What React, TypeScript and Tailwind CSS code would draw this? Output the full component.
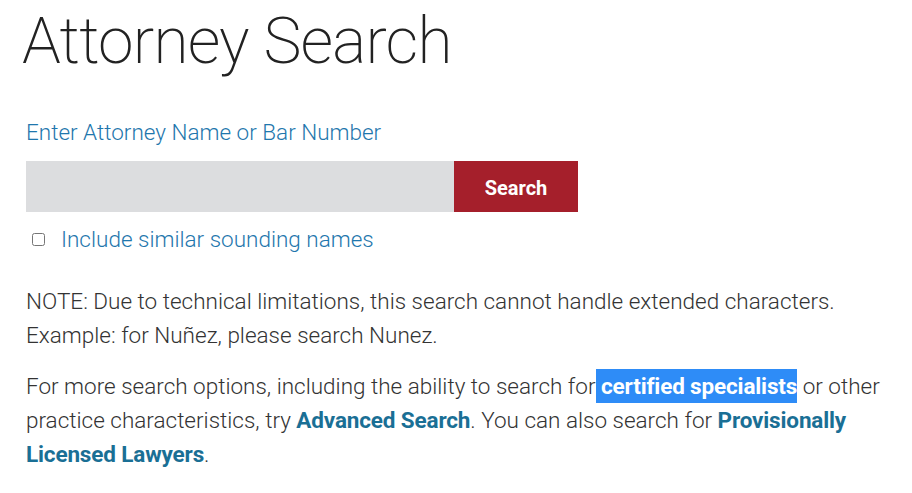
import React from 'react';

const App: React.FC = () => {
  return (
    <div className="min-h-screen bg-white px-[26px] font-['Roboto',sans-serif] text-[#333]">
      <h1 className="ml-[-4px] pt-[2px] text-[64px] font-[200] leading-[80px] tracking-[-0.8px] text-[#222]">Attorney Search</h1>

      <form className="mt-[36px]" onSubmit={e => e.preventDefault()}>
        <label htmlFor="q" className="block text-[22.5px] font-light leading-[28px] text-[#1f77ad]">
          Enter Attorney Name or Bar Number
        </label>
        <div className="mt-[15px] flex">
          <input id="q" type="text" className="h-[51px] w-[428px] bg-[#dcdddf] px-3 text-[18px] outline-none" />
          <button type="submit" className="h-[51px] w-[124px] pt-[2px] bg-[#a51f2b] text-[20px] font-bold text-white">
            Search
          </button>
        </div>
        <label className="mt-[13px] flex h-[28px] items-center">
          <input type="checkbox" className="ml-[6px] h-[13px] w-[13px]" />
          <span className="ml-[16px] text-[22.5px] font-light leading-[28px] text-[#1f77ad]">Include similar sounding names</span>
        </label>
      </form>

      <p className="mt-[31px] text-[22.5px] font-light leading-[34px]">
        NOTE: Due to technical limitations, this search cannot handle extended characters. Example: for Nuñez, please search Nunez.
      </p>
      <p className="mt-[17px] text-[22.5px] font-light leading-[34px]">
        For more search options, including the ability to search for
        <a href="#" className="bg-[#2e8cf7] py-[4px] font-bold tracking-[-0.15px] text-white">{' '}certified specialists</a> or other practice characteristics, try{' '}
        <a href="#" className="font-bold tracking-[-0.15px] text-[#1a6f95]">Advanced Search</a>. You can also search for{' '}
        <a href="#" className="font-bold tracking-[-0.15px] text-[#1a6f95]">Provisionally Licensed Lawyers</a>.
      </p>
    </div>
  );
};

export default App;
